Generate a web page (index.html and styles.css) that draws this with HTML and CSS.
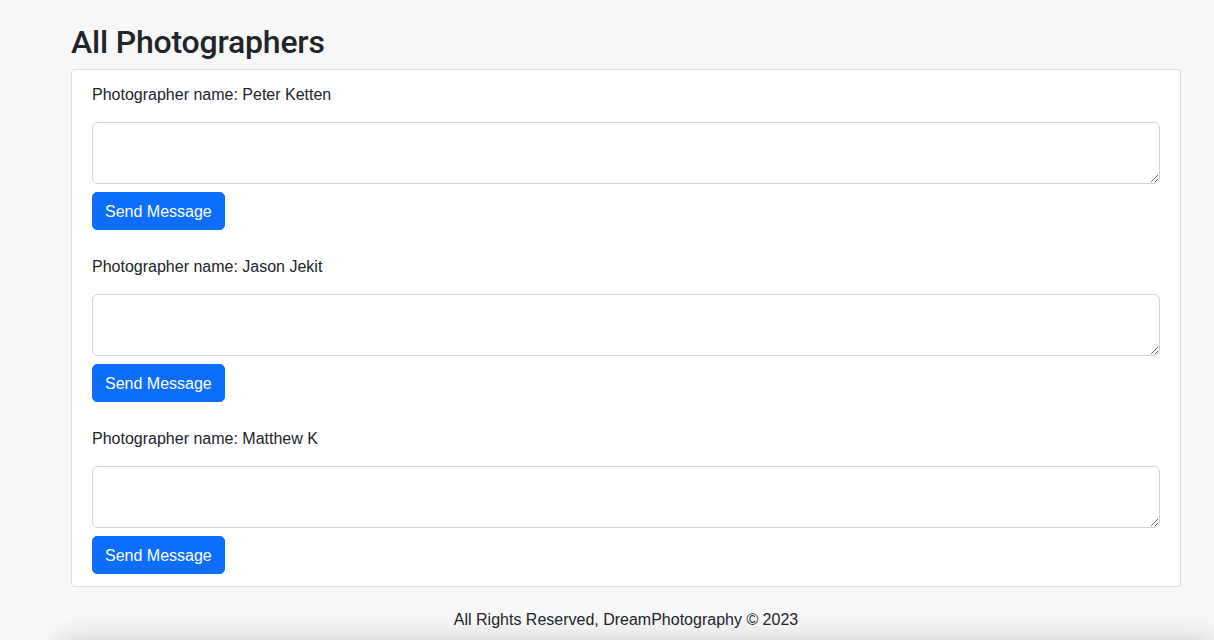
FILE: index.html
```html
<!DOCTYPE html>
<html lang="en">
<head>
<meta charset="utf-8">
<title>All Photographers</title>
<link rel="stylesheet" href="styles.css">
</head>
<body>
<main class="container">
  <h2 class="page-title">All Photographers</h2>
  <div class="card">
    <div class="card-body">
      <form class="item">
        <p class="name">Photographer name: Peter Ketten</p>
        <textarea class="form-control" rows="2"></textarea>
        <button type="button" class="btn">Send Message</button>
      </form>
      <form class="item">
        <p class="name">Photographer name: Jason Jekit</p>
        <textarea class="form-control" rows="2"></textarea>
        <button type="button" class="btn">Send Message</button>
      </form>
      <form class="item">
        <p class="name">Photographer name: Matthew K</p>
        <textarea class="form-control" rows="2"></textarea>
        <button type="button" class="btn">Send Message</button>
      </form>
    </div>
  </div>
  <footer class="footer">All Rights Reserved, DreamPhotography © 2023</footer>
</main>
<div class="bottom-bar"></div>
</body>
</html>
```

FILE: styles.css
```css
* { box-sizing: border-box; }
html, body { margin: 0; padding: 0; }
body {
  background: #f8f8f8;
  color: #212529;
  font-family: "Liberation Sans", Arial, sans-serif;
  font-size: 16px;
  line-height: 1.5;
}
.container {
  width: 1110px;
  margin-left: 71px;
  padding-top: 23px;
}
.page-title {
  margin: 0 0 8px;
  font-family: Roboto, "Liberation Sans", Arial, sans-serif;
  font-size: 32px;
  font-weight: 500;
  line-height: 1.2;
  letter-spacing: -0.2px;
}
.card {
  background: #fff;
  border: 1px solid rgba(0,0,0,0.125);
  border-radius: 4px;
}
.card-body {
  padding: 12px 20px;
  display: flex;
  flex-direction: column;
  gap: 24px;
}
.item {
  display: flex;
  flex-direction: column;
  align-items: flex-start;
  margin: 0;
}
.name { margin: 0 0 15px; padding-top: 1px; }
.form-control {
  display: block;
  width: 100%;
  height: 62px;
  padding: 6px 12px;
  font: inherit;
  border: 1px solid #ced4da;
  border-radius: 6px;
  background: #fff;
  resize: vertical;
}
.btn {
  margin-top: 8px;
  background: #0d6efd;
  color: #fff;
  border: 1px solid #0d6efd;
  border-radius: 5px;
  padding: 7px 12px 5px;
  font: inherit;
  line-height: 24px;
  cursor: pointer;
}
.footer {
  margin-top: 20px;
  padding-top: 1px;
  text-align: center;
  line-height: 24px;
}
.bottom-bar {
  margin: 8px 0 0 60px;
  height: 60px;
  background: #f8f8f8;
  box-shadow: 0 0 28px rgba(0,0,0,0.18);
}
```
